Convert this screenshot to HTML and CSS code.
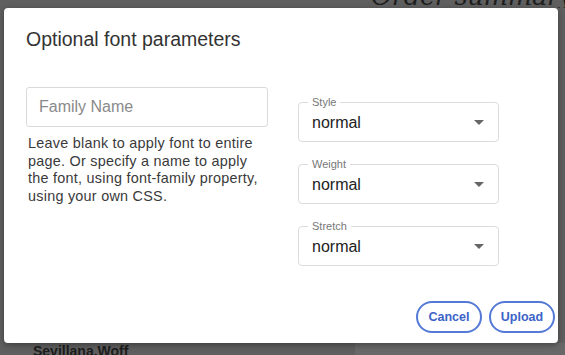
FILE: index.html
```html
<!DOCTYPE html>
<html>
<head>
<meta charset="utf-8">
<link rel="stylesheet" href="styles.css">
</head>
<body>
<div class="page">
  <header class="page-head">
    <span class="summary">Order summary</span>
  </header>
  <div class="page-spacer"></div>
  <footer class="page-foot">
    <span class="file">Sevillana.Woff</span>
  </footer>
</div>

<div class="dialog">
  <h2 class="title">Optional font parameters</h2>
  <div class="body">
    <div class="col-left">
      <input class="family" type="text" placeholder="Family Name">
      <p class="help"><span class="line">Leave blank to apply font to entire</span> <span class="line">page. Or specify a name to apply</span> <span class="line">the font, using font-family property,</span> <span class="line">using your own CSS.</span></p>
    </div>
    <div class="col-right">
      <div class="select">
        <span class="label">Style</span>
        <span class="value">normal</span>
        <svg class="arrow" width="10" height="5" viewBox="0 0 10 5"><path d="M0 0 L10 0 L5 5 Z"/></svg>
      </div>
      <div class="select">
        <span class="label">Weight</span>
        <span class="value">normal</span>
        <svg class="arrow" width="10" height="5" viewBox="0 0 10 5"><path d="M0 0 L10 0 L5 5 Z"/></svg>
      </div>
      <div class="select">
        <span class="label">Stretch</span>
        <span class="value">normal</span>
        <svg class="arrow" width="10" height="5" viewBox="0 0 10 5"><path d="M0 0 L10 0 L5 5 Z"/></svg>
      </div>
    </div>
  </div>
  <div class="actions">
    <button class="btn">Cancel</button>
    <button class="btn">Upload</button>
  </div>
</div>
</body>
</html>
```
FILE: styles.css
```css
html, body {
  margin: 0;
  padding: 0;
}
body {
  width: 565px;
  height: 355px;
  overflow: hidden;
  background: #5f5f5f;
  font-family: "Liberation Sans", Arial, sans-serif;
  position: relative;
}
.page {
  height: 355px;
  display: flex;
  flex-direction: column;
}
.page-head {
  height: 8px;
  display: flex;
  justify-content: flex-end;
  align-items: flex-end;
  overflow: hidden;
}
.summary {
  font-family: "DejaVu Serif", serif;
  font-style: italic;
  font-size: 26px;
  line-height: 26px;
  color: #1e1e1e;
  margin-right: -8px;
  margin-bottom: -1px;
  letter-spacing: -0.5px;
}
.page-spacer {
  flex: 1;
}
.page-foot {
  height: 12px;
  overflow: hidden;
  padding-left: 33px;
  background: linear-gradient(to right, #5f5f5f 0, #5f5f5f 355px, #686868 355px);
}
.file {
  display: block;
  font-weight: bold;
  font-size: 14px;
  line-height: 16px;
  color: #1c1c1c;
}

.dialog {
  position: absolute;
  left: 4px;
  top: 8px;
  width: 554px;
  height: 335px;
  background: #fff;
  border-radius: 4px;
  box-shadow: 0 2px 6px rgba(0,0,0,0.35);
  box-sizing: border-box;
  padding: 19px 3px 10px 22px;
  display: flex;
  flex-direction: column;
}
.title {
  margin: 0;
  font-weight: normal;
  font-size: 19.5px;
  line-height: 24px;
  color: #333;
}
.body {
  display: flex;
  gap: 30px;
  margin-top: 36px;
}
.col-left {
  width: 242px;
}
.family {
  display: block;
  box-sizing: border-box;
  width: 242px;
  height: 40px;
  margin: 0;
  border: 1px solid #dadada;
  border-radius: 3px;
  padding: 0 12px;
  font-family: "Liberation Sans", Arial, sans-serif;
  font-size: 16px;
  color: #333;
  outline: none;
}
.family::placeholder {
  color: #8a8a8a;
}
.help {
  margin: 8px 0 0 2px;
  font-size: 14.4px;
  line-height: 17.7px;
  letter-spacing: 0.25px;
  color: #3a3a3a;
}
.line {
  display: block;
  white-space: nowrap;
}
.col-right {
  width: 201px;
  display: flex;
  flex-direction: column;
  gap: 22px;
  margin-top: 15px;
}
.select {
  position: relative;
  box-sizing: border-box;
  height: 40px;
  border: 1px solid #dcdcdc;
  border-radius: 4px;
  padding: 0 14px 0 13px;
  display: flex;
  align-items: center;
  justify-content: space-between;
}
.label {
  position: absolute;
  left: 9px;
  top: -7px;
  padding: 0 4px;
  background: #fff;
  font-size: 11px;
  line-height: 12px;
  color: #777;
}
.value {
  font-size: 16px;
  color: #222;
  margin-top: 1px;
}
.arrow {
  fill: #666;
  margin-top: 1px;
}
.actions {
  margin-top: auto;
  display: flex;
  justify-content: flex-end;
  gap: 7px;
}
.btn {
  box-sizing: border-box;
  width: 66px;
  height: 32px;
  border: 2px solid #5479d6;
  border-radius: 16px;
  background: #fff;
  color: #3c63c8;
  font-family: "Liberation Sans", Arial, sans-serif;
  font-weight: bold;
  font-size: 12.5px;
  padding: 0;
}
```
